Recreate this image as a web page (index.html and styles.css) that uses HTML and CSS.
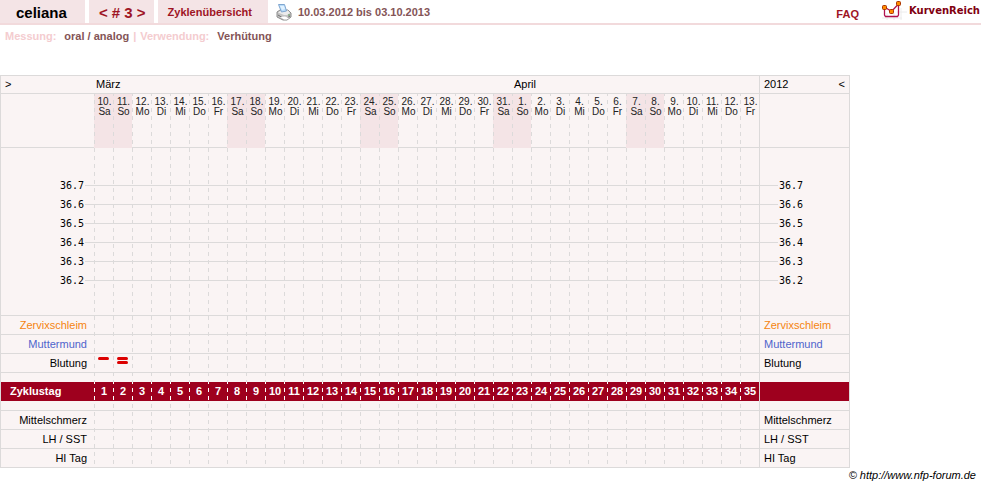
FILE: index.html
```html
<!doctype html>
<html lang="de">
<head>
    <meta charset="UTF-8">
    <title>KurvenReich - celiana</title>
    <link rel="stylesheet" href="styles.css">
</head>
<body>
<header class="top">
    <h1 class="tab name">celiana</h1>
    <nav class="tab cycle">
        <a href="#prev">&lt;</a> # 3 <a href="#next">&gt;</a>
    </nav>
    <a class="tab overview" href="#zyklen">Zyklenübersicht</a>
    <a class="print" href="#print" aria-label="Drucken">
        <svg width="16" height="17" viewBox="0 0 16 17">
            <path d="M1 8l3-2h8l3 3v4l-4 3H7l-6-3z" fill="#c4c4c4" stroke="#8c8c8c"/>
            <path d="M2 8.500l3-2h7l2 2.500-3 2H8z" fill="#ececec"/>
            <path d="M2.500.500h6l2 6.500-5 1z" fill="#b9dcf8" stroke="#7fa6d0"/>
            <path d="M4 2h4l1 3-3 1z" fill="#e2f2ff"/>
            <path d="M2 11l5 3h4l3-2" fill="none" stroke="#6e6e6e"/>
            <path d="M4 13l4 2.500h3l2-1.500-4-1.500z" fill="#fff"/>
            <path d="M12 11h2" stroke="#5a9a5a"/>
        </svg>
    </a>
    <span class="period">10.03.2012 bis 03.10.2013</span>
    <a class="faq" href="#faq">FAQ</a>
    <a class="brand" href="#home">
        <svg width="26" height="20" viewBox="0 0 26 20">
            <path d="M6 13v7M13 13v7M20 8v12M1 18h20M16 12h10" stroke="#ececec"/>
            <path d="M3.500 7v8l1 1.500h12l1-1.500V4l-7 7.500-7-4.500" fill="none" stroke="#b0104c" stroke-width="1.300"/>
            <g fill="#ff8c00" stroke="#a83200">
                <rect x="1.500" y="5.500" width="4" height="4" rx="1"/>
                <rect x="8.500" y="9.500" width="4" height="4" rx="1"/>
                <rect x="15.500" y="1.500" width="4" height="4" rx="1"/>
            </g>
        </svg>
        KurvenReich
    </a>
</header>
<p class="info">
    <span class="key">Messung:</span><span class="val">oral / analog</span>
    <span class="key sep">|</span>
    <span class="key">Verwendung:</span><span class="val">Verhütung</span>
</p>
<table class="chart">
    <thead>
    <tr class="months">
        <th><a href="#back">&gt;</a></th>
        <th colspan="22">März</th>
        <th colspan="13">April</th>
        <th class="end"><div class="year">2012 <a href="#forward">&lt;</a></div></th>
    </tr>
    <tr class="dates"><th></th></tr>
    </thead>
    <tbody>
    <tr class="curve">
        <th><ul class="scale"></ul></th>
        <td colspan="35"><ul class="scale lines"></ul></td>
        <th class="end"><ul class="scale"></ul></th>
    </tr>
    <tr class="row mucus" data-label="Zervixschleim"></tr>
    <tr class="row cervix" data-label="Muttermund"></tr>
    <tr class="row" data-label="Blutung" data-marks="1,2"></tr>
    <tr class="space upper"><th></th><td colspan="35"></td><th class="end"></th></tr>
    <tr class="days"><th>Zyklustag</th></tr>
    <tr class="space"><th></th><td colspan="35"></td><th class="end"></th></tr>
    <tr class="row" data-label="Mittelschmerz"></tr>
    <tr class="row" data-label="LH / SST"></tr>
    <tr class="row" data-label="HI Tag"></tr>
    </tbody>
</table>
<footer>© <a href="#forum">http://www.nfp-forum.de</a></footer>
<script src="chart.js"></script>
</body>
</html>
```
FILE: styles.css
```css
body {
    margin: 0;
    font: 11px/13px "Liberation Sans", Arial, sans-serif;
    color: #000;
    background: #fff;
}

a {
    color: inherit;
    text-decoration: none;
}

.top {
    display: flex;
    height: 23px;
    border-bottom: 2px solid #f2dadc;
    line-height: 25px;
    font-weight: bold;
    color: #9e1424;
}

.tab {
    margin: 0 4px 0 0;
    background: #f4e4e6;
}

.name {
    padding: 0 18px 0 16px;
    font-size: 15px;
    color: #000;
}

.cycle {
    padding: 0 8px 0 10px;
    font-size: 15px;
}

.overview {
    padding: 0 16px 0 10px;
}

.print {
    margin-left: 4px;
    padding-top: 4px;
    line-height: 0;
}

.period {
    margin-left: 6px;
    color: #845456;
}

.faq {
    margin-left: auto;
    padding-top: 2px;
}

.brand {
    display: flex;
    gap: 2px;
    margin-left: 22px;
    padding-right: 1px;
    font: bold 10px/21px "DejaVu Sans", Verdana, sans-serif;
    color: #800010;
}

.info {
    display: flex;
    margin: 5px 0 32px;
    padding-left: 5px;
    font-weight: bold;
}

.key {
    color: #f4cccf;
}

.val {
    margin-left: 8px;
    color: #845456;
}

.sep {
    margin: 0 4px;
}

/* gestrichelte Linien alle 19px, Strich 4px, Abstand 4px */
.chart {
    border: 1px solid #dcdada;
    border-spacing: 0;
    background-color: #faf4f4;
    background-image: linear-gradient(transparent 50%, #faf4f4 50%),
        linear-gradient(to right, #dcdada 1px, transparent 1px);
    background-size: 19px 8px;
    background-position: 93px 0;
}

.chart th,
.chart td {
    box-sizing: border-box;
    padding: 0;
    border-bottom: 1px solid #dcdada;
    font-weight: normal;
}

.chart tr > th:first-child {
    width: 93px;
    background: #faf4f4;
}

.chart tr > .end {
    width: 90px;
    border-left: 1px solid #dcdada;
    background: #faf4f4;
}

.months th {
    height: 18px;
    padding: 0 2px;
    text-align: left;
    background: #faf4f4;
}

.months th:first-child,
.months .end {
    padding: 0 4px;
}

.year {
    display: flex;
    justify-content: space-between;
}

.dates th {
    height: 54px;
}

.chart .day {
    width: 19px;
    padding: 3px 0 0 2px;
    font-size: 10px;
    line-height: 10px;
    vertical-align: top;
    color: #222;
}

.chart .weekend {
    border-color: #f4e4e6;
    background-image: linear-gradient(transparent 50%, #f4e4e6 50%),
        linear-gradient(to right, #dcdada 1px, #f4e4e6 1px);
    background-size: 19px 8px;
    background-position: 0 -2px;
}

.curve > * {
    height: 168px;
    vertical-align: top;
}

.scale {
    margin: 0;
    padding: 28px 0 0;
    list-style: none;
    font: 10px/19px "DejaVu Sans Mono", monospace;
}

.scale li {
    display: flex;
    align-items: center;
    justify-content: flex-end;
    gap: 1px;
    height: 19px;
}

.scale li::after {
    content: '';
    width: 9px;
    height: 1px;
    background: #dcdada;
}

.scale.lines li::after {
    width: 100%;
}

.end .scale li {
    flex-direction: row-reverse;
}

.end .scale li::after {
    width: 18px;
}

.row > * {
    height: 19px;
}

.chart .row th:first-child {
    padding-right: 7px;
    text-align: right;
}

.chart .row .end {
    padding-left: 4px;
    text-align: left;
}

.mucus {
    color: #f58410;
}

.cervix {
    color: #4f64cc;
}

.mark {
    display: block;
    width: 11px;
    height: 3px;
    margin: 0 auto 1px;
    border-radius: 2px;
    background: #dc0000;
}

.chart .row td {
    padding-top: 3px;
    vertical-align: top;
}

.space > * {
    height: 10px;
}

.chart .upper > * {
    height: 9px;
    border-bottom: 0;
}

.chart .row:last-child > * {
    height: 18px;
    border-bottom: 0;
}

.chart tr.days > th,
.chart tr.days > td {
    height: 19px;
    border-bottom: 0;
    font-weight: bold;
    text-align: center;
    color: #fff;
    background-color: #9e001e;
}

.chart .days td {
    padding-left: 1px;
    background-image: linear-gradient(transparent 50%, #9e001e 50%),
        linear-gradient(to right, #fff 1px, #9e001e 1px);
    background-size: 19px 8px;
    background-position: 0 -2px;
}

.chart tr.days > th:first-child {
    padding-left: 9px;
    text-align: left;
}

footer {
    padding: 1px 5px 0 0;
    text-align: right;
    font-style: italic;
}
```
FILE: chart.js
```javascript
(function () {
    var DAYS = 35;
    var names = ['So', 'Mo', 'Di', 'Mi', 'Do', 'Fr', 'Sa'];

    function cell(tag, row, cls, html) {
        var el = document.createElement(tag);
        el.className = cls;
        el.innerHTML = html;
        row.appendChild(el);
    }

    var dates = document.querySelector('.dates');
    var days = document.querySelector('.days');
    for (var i = 0; i < DAYS; i++) {
        var d = new Date(2012, 2, 10 + i);
        var weekend = d.getDay() % 6 === 0;
        cell('th', dates, weekend ? 'day weekend' : 'day', d.getDate() + '.<br>' + names[d.getDay()]);
        cell('td', days, '', i + 1);
    }
    cell('th', dates, 'end', '');
    cell('th', days, 'end', '');

    var scales = document.querySelectorAll('.scale');
    for (i = 0; i < scales.length; i++) {
        var lines = scales[i].classList.contains('lines');
        for (var t = 367; t > 361; t--) {
            scales[i].innerHTML += '<li>' + (lines ? '' : (t / 10).toFixed(1)) + '</li>';
        }
    }

    var rows = document.querySelectorAll('.row');
    for (i = 0; i < rows.length; i++) {
        var marks = (rows[i].dataset.marks || '').split(',');
        cell('th', rows[i], '', rows[i].dataset.label);
        for (var k = 0; k < DAYS; k++) {
            cell('td', rows[i], '', '<i class="mark"></i>'.repeat(marks[k] || 0));
        }
        cell('th', rows[i], 'end', rows[i].dataset.label);
    }
})()
```
